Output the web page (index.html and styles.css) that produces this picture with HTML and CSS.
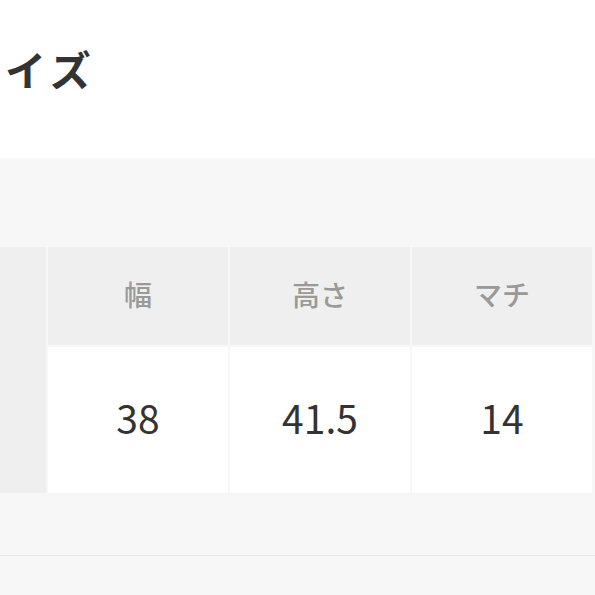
FILE: index.html
```html
<!DOCTYPE html>
<html lang="ja">
<head>
<meta charset="utf-8">
<link rel="stylesheet" href="styles.css">
</head>
<body>
<header class="page-head">
  <h1 class="page-title">サイズ</h1>
</header>
<section class="size-panel">
  <div class="size-table">
    <div class="cell label"></div>
    <div class="cell head">幅</div>
    <div class="cell head">高さ</div>
    <div class="cell head">マチ</div>
    <div class="cell value">38</div>
    <div class="cell value">41.5</div>
    <div class="cell value">14</div>
  </div>
</section>
<div class="below"></div>
</body>
</html>
```

FILE: styles.css
```css
html, body {
  margin: 0;
  padding: 0;
  background: #ffffff;
  font-family: "Noto Sans CJK JP", "Noto Sans", sans-serif;
  overflow: hidden;
}

.page-head {
  height: 158px;
  box-sizing: border-box;
  padding-top: 48px;
}

.page-title {
  margin: 0 0 0 -41px;
  font-size: 41px;
  line-height: 41px;
  font-weight: 700;
  letter-spacing: 5px;
  color: #333333;
  white-space: nowrap;
}

.size-panel {
  background: #f7f7f7;
  padding: 89px 3px 62px 0;
  border-bottom: 1px solid #e6e6e6;
}

.size-table {
  display: grid;
  grid-template-columns: 46px 1fr 1fr 1fr;
  grid-template-rows: 98px 146px;
  gap: 2px;
}

.cell {
  display: flex;
  align-items: center;
  justify-content: center;
  box-sizing: border-box;
}

.label {
  grid-row: 1 / span 2;
  background: #efefef;
}

.head {
  background: #efefef;
  color: #999999;
  font-size: 28px;
  font-weight: 500;
  padding-bottom: 4px;
}

.value {
  background: #ffffff;
  color: #333333;
  font-size: 39px;
  font-weight: 400;
  padding-bottom: 7px;
}

.below {
  background: #f7f7f7;
  height: 60px;
}
```
